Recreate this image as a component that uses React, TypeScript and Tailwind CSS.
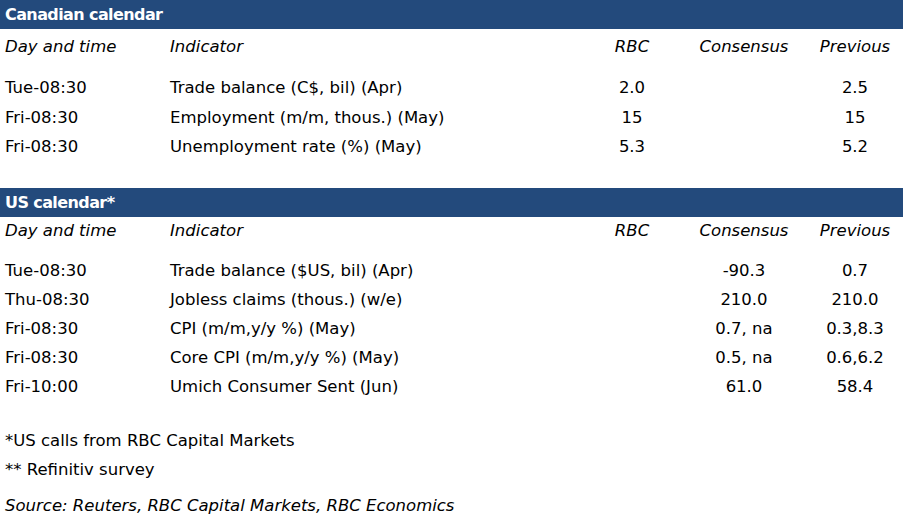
import React from 'react';

type Row = { day: string; indicator: string; rbc?: string; consensus?: string; previous?: string };

const canadaRows: Row[] = [
  { day: 'Tue-08:30', indicator: 'Trade balance (C$, bil) (Apr)', rbc: '2.0', previous: '2.5' },
  { day: 'Fri-08:30', indicator: 'Employment (m/m, thous.) (May)', rbc: '15', previous: '15' },
  { day: 'Fri-08:30', indicator: 'Unemployment rate (%) (May)', rbc: '5.3', previous: '5.2' },
];

const usRows: Row[] = [
  { day: 'Tue-08:30', indicator: 'Trade balance ($US, bil) (Apr)', consensus: '-90.3', previous: '0.7' },
  { day: 'Thu-08:30', indicator: 'Jobless claims (thous.) (w/e)', consensus: '210.0', previous: '210.0' },
  { day: 'Fri-08:30', indicator: 'CPI (m/m,y/y %) (May)', consensus: '0.7, na', previous: '0.3,8.3' },
  { day: 'Fri-08:30', indicator: 'Core CPI (m/m,y/y %) (May)', consensus: '0.5, na', previous: '0.6,6.2' },
  { day: 'Fri-10:00', indicator: 'Umich Consumer Sent (Jun)', consensus: '61.0', previous: '58.4' },
];

const Bar = ({ title }: { title: string }) => (
  <div className="h-[29px] bg-[#234a7c] flex items-center pl-[5px] text-white font-bold text-[16px] tracking-[-0.6px]">
    {title}
  </div>
);

const Cells = ({ r, className }: { r: Row; className: string }) => (
  <div className={`flex items-center pl-[5px] ${className}`}>
    <div className="w-[165px]">{r.day}</div>
    <div className="w-[414px]">{r.indicator}</div>
    <div className="w-[96px] text-center">{r.rbc}</div>
    <div className="w-[96px] ml-[16px] text-center">{r.consensus}</div>
    <div className="w-[96px] ml-[15px] text-center">{r.previous}</div>
  </div>
);

const header: Row = { day: 'Day and time', indicator: 'Indicator', rbc: 'RBC', consensus: 'Consensus', previous: 'Previous' };

export default function App() {
  return (
    <div className="w-[903px] h-[519px] bg-white text-black text-[16.5px] overflow-hidden font-['DejaVu_Sans',sans-serif]">
      <Bar title="Canadian calendar" />
      <Cells r={header} className="h-[37px] italic" />
      <div className="h-[8px]" />
      {canadaRows.map((r, i) => (
        <Cells key={i} r={r} className="h-[29.5px]" />
      ))}
      <div className="h-[25.5px]" />
      <Bar title="US calendar*" />
      <Cells r={header} className="h-[29px] italic" />
      <div className="h-[10.5px]" />
      {usRows.map((r, i) => (
        <Cells key={i} r={r} className="h-[29px]" />
      ))}
      <div className="h-[25px]" />
      <div className="h-[29px] flex items-center pl-[5px]">*US calls from RBC Capital Markets</div>
      <div className="h-[29px] flex items-center pl-[5px]">** Refinitiv survey</div>
      <div className="h-[7px]" />
      <div className="h-[29px] flex items-center pl-[5px] italic">Source: Reuters, RBC Capital Markets, RBC Economics</div>
    </div>
  );
}
